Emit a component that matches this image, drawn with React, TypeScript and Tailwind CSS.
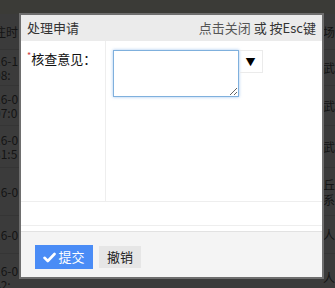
import React from 'react';

const leftRows = [
  { h: 36, a: '注时', b: '' },
  { h: 36, a: '16-1', b: '08:' },
  { h: 40, a: '16-0', b: '07:0' },
  { h: 42, a: '16-0', b: '31:5' },
  { h: 48, a: '16-0', b: '' },
  { h: 38, a: '16-0', b: '' },
  { h: 48, a: '16-0', b: '42:' },
];

const rightRows = [
  { h: 36, a: '场', b: '' },
  { h: 36, a: '武', b: '' },
  { h: 40, a: '武', b: '' },
  { h: 42, a: '武', b: '' },
  { h: 48, a: '丘', b: '系' },
  { h: 38, a: '人', b: '' },
  { h: 48, a: '人', b: '' },
];

export default function App() {
  return (
    <div
      className="relative w-[335px] h-[288px] overflow-hidden bg-[#3b3b3b] text-[13px]"
      style={{ fontFamily: '"Noto Sans CJK SC", "Noto Sans", sans-serif' }}
    >
      <div className="h-[14px] bg-[#3b3b37]" />
      <div className="flex justify-between">
        <div className="w-[22px] flex flex-col overflow-hidden">
          {leftRows.map((r, i) => (
            <div
              key={i}
              className="flex flex-col justify-center border-b border-[#353535] text-[12px] leading-[14px] text-[#141414] -ml-[6px] whitespace-nowrap"
              style={{ height: r.h }}
            >
              <span>{r.a}</span>
              {r.b && <span>{r.b}</span>}
            </div>
          ))}
        </div>
        <div className="w-[12px] flex flex-col overflow-hidden">
          {rightRows.map((r, i) => (
            <div
              key={i}
              className="flex flex-col justify-center border-b border-[#353535] text-[12px] leading-[15px] text-[#141414]"
              style={{ height: r.h }}
            >
              <span>{r.a}</span>
              {r.b && <span>{r.b}</span>}
            </div>
          ))}
        </div>
      </div>

      {/* Dialog */}
      <div className="absolute left-[19px] top-[13px] w-[305px] h-[266px] border-2 border-[#6e6e6e] flex flex-col bg-white">
        <div className="h-[26px] bg-[#ebebeb] flex items-center justify-between px-[6px] text-[#333]">
          <span>处理申请</span>
          <span>
            <span className="text-[#555]">点击关闭</span> 或 按Esc键
          </span>
        </div>

        <div className="flex h-[160px]">
          <div className="w-[85px] border-r border-[#eeeeee] pl-[6px] pt-[8px] text-[#111]">
            <span className="text-[#d04040] text-[9px] align-top">*</span>核查意见：
          </div>
          <div className="flex items-start pl-[7px] pt-[9px]">
            <textarea className="w-[126px] h-[47px] border border-[#7fb0dd] shadow-[0_0_3px_rgba(100,160,230,0.6)] outline-none resize" />
            <div className="w-[24px] h-[23px] border border-[#ebebeb] border-l-0 flex items-center justify-center text-[10px] text-black">
              ▼
            </div>
          </div>
        </div>

        <div className="h-[25px] border-t border-b border-[#eeeeee]" />
        <div className="h-[5px]" />

        <div className="flex-1 bg-[#f4f4f4] border-t border-[#e2e2e2] flex items-start gap-[6px] pl-[14px] pt-[13px]">
          <button className="h-[24px] w-[58px] bg-[#4a8cf6] text-white flex items-center justify-center gap-[2px]">
            <svg width="13" height="11" viewBox="0 0 13 11">
              <path d="M1.5 5.8 L4.8 9 L11.5 2" stroke="white" strokeWidth="2.6" fill="none" strokeLinecap="round" strokeLinejoin="round" />
            </svg>
            <span>提交</span>
          </button>
          <button className="h-[22px] w-[42px] bg-[#e6e6e6] text-[#222] mt-[1px]">撤销</button>
        </div>
      </div>
    </div>
  );
}
